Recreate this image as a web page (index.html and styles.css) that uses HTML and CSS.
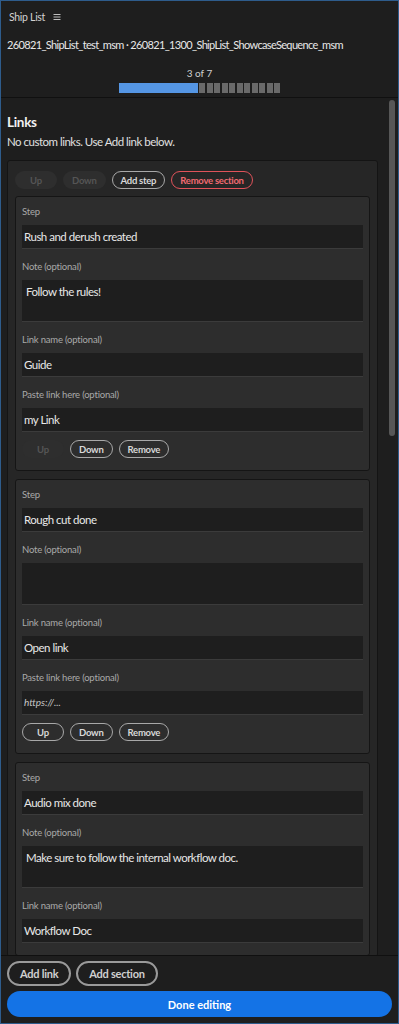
FILE: index.html
```html
<!DOCTYPE html>
<html lang="en">
<head>
    <meta charset="UTF-8">
    <meta name="viewport" content="width=device-width, initial-scale=1.0">
    <title>Ship List</title>
    <link rel="stylesheet" href="styles.css">
</head>
<body>
    <div class="panel">
        <header class="top">
            <div class="app-bar">
                <span class="app-name">Ship List</span>
                <svg class="menu-icon" width="8" height="8" viewBox="0 0 8 8">
                    <path d="M0.5 1.5h7M0.5 4h7M0.5 6.5h7" stroke="#bdbdbd" stroke-width="1"/>
                </svg>
            </div>
            <div class="doc-title">260821_ShipList_test_msm · 260821_1300_ShipList_ShowcaseSequence_msm</div>
            <div class="step-count">3 of 7</div>
            <div class="progress">
                <div class="progress-fill"></div>
                <span class="tick"></span><span class="tick"></span><span class="tick"></span>
                <span class="tick"></span><span class="tick"></span><span class="tick"></span>
                <span class="tick"></span><span class="tick"></span><span class="tick"></span>
                <span class="tick"></span><span class="tick"></span>
            </div>
        </header>

        <div class="scroll">
            <div class="scroll-content">
                <h2 class="links-title">Links</h2>
                <p class="links-desc">No custom links. Use Add link below.</p>

                <div class="section">
                    <div class="btn-row">
                        <button class="pill" disabled>Up</button>
                        <button class="pill" disabled>Down</button>
                        <button class="pill">Add step</button>
                        <button class="pill danger">Remove section</button>
                    </div>

                    <div class="step-card">
                        <label class="field-label">Step</label>
                        <div class="input">Rush and derush created</div>
                        <label class="field-label">Note (optional)</label>
                        <div class="input textarea">Follow the rules!</div>
                        <label class="field-label">Link name (optional)</label>
                        <div class="input">Guide</div>
                        <label class="field-label">Paste link here (optional)</label>
                        <div class="input">my Link</div>
                        <div class="btn-row card-btns">
                            <button class="pill" disabled>Up</button>
                            <button class="pill">Down</button>
                            <button class="pill">Remove</button>
                        </div>
                    </div>

                    <div class="step-card">
                        <label class="field-label">Step</label>
                        <div class="input">Rough cut done</div>
                        <label class="field-label">Note (optional)</label>
                        <div class="input textarea"></div>
                        <label class="field-label">Link name (optional)</label>
                        <div class="input">Open link</div>
                        <label class="field-label">Paste link here (optional)</label>
                        <div class="input placeholder">https://...</div>
                        <div class="btn-row card-btns">
                            <button class="pill">Up</button>
                            <button class="pill">Down</button>
                            <button class="pill">Remove</button>
                        </div>
                    </div>

                    <div class="step-card">
                        <label class="field-label">Step</label>
                        <div class="input">Audio mix done</div>
                        <label class="field-label">Note (optional)</label>
                        <div class="input textarea">Make sure to follow the internal workflow doc.</div>
                        <label class="field-label">Link name (optional)</label>
                        <div class="input">Workflow Doc</div>
                    </div>
                </div>
            </div>
            <div class="scrollbar"><div class="thumb"></div></div>
        </div>

        <footer class="bottom">
            <div class="bottom-row">
                <button class="pill big">Add link</button>
                <button class="pill big">Add section</button>
            </div>
            <button class="done-btn">Done editing</button>
        </footer>
    </div>
</body>
</html>
```

FILE: styles.css
```css
body {
    margin: 0;
    background-color: #1e1e1e;
    font-family: 'Lato', 'Noto Sans', sans-serif;
    color: #e6e6e6;
}
.panel {
    height: 1024px;
    box-sizing: border-box;
    border: 1px solid #2e5c8c; /* синеватая рамка панели */
    display: flex;
    flex-direction: column;
    overflow: hidden;
}

/* Шапка */
.top {
    padding: 0 6px 4px;
    border-bottom: 1px solid #101010;
}
.app-bar {
    height: 32px;
    display: flex;
    align-items: center;
    padding-left: 2px;
    gap: 8px;
}
.app-name {
    font-size: 10.5px;
    letter-spacing: -0.3px;
    color: #d2d2d2;
}
.doc-title {
    margin-top: 4px;
    font-size: 11px;
    letter-spacing: -0.65px;
    line-height: 16px;
    color: #e8e8e8;
    white-space: nowrap;
}
.step-count {
    margin-top: 13px;
    font-size: 10px;
    line-height: 14px;
    text-align: center;
    color: #cfcfcf;
}
.progress {
    margin-top: 3px;
    display: flex;
    justify-content: center;
    height: 10px;
}
.progress-fill {
    width: 79px;
    background-color: #5596e4;
}
.tick {
    width: 6px;
    margin-left: 1.5px;
    background-color: #6a6a6a;
}

/* Прокручиваемая часть */
.scroll {
    flex: 1;
    display: flex;
    min-height: 0;
}
.scroll-content {
    flex: 1;
    overflow: hidden;
    padding: 15px 7px 0 6px;
}
.scrollbar {
    width: 13px;
    padding-top: 2px;
}
.thumb {
    width: 6px;
    height: 336px;
    margin-left: 4px;
    border-radius: 3px;
    background-color: #575757;
}
.links-title {
    margin: 0;
    font-size: 13.5px;
    letter-spacing: -0.3px;
    line-height: 18px;
    font-weight: bold;
    color: #f2f2f2;
}
.links-desc {
    margin: 3px 0 10px;
    font-size: 11.5px;
    letter-spacing: -0.5px;
    line-height: 16px;
    color: #e0e0e0;
}
.section {
    background-color: #262626;
    border: 1px solid #141414;
    border-radius: 3px;
    padding: 10px 7px 0;
    display: flex;
    flex-direction: column;
    gap: 8px;
}
.section > .btn-row {
    margin-bottom: -1px;
}
.btn-row {
    display: flex;
    gap: 6px;
}
.pill {
    height: 18px;
    min-width: 42px;
    padding: 0 8px;
    box-sizing: border-box;
    border: 1.5px solid #a8a8a8;
    border-radius: 9px;
    background: transparent;
    color: #d8d8d8;
    font-family: inherit;
    font-size: 9.5px;
    letter-spacing: -0.25px;
    font-weight: bold;
    cursor: pointer;
}
.pill:disabled {
    border-color: transparent;
    background-color: #2e2e2e;
    color: #555;
}
.pill.danger {
    border-color: #e0535a;
    color: #f06a70;
}
.step-card {
    background-color: #2d2d2d;
    border: 1px solid #151515;
    border-radius: 3px;
    padding: 8px 6px 12px;
    display: flex;
    flex-direction: column;
}
.field-label {
    font-size: 9.5px;
    letter-spacing: -0.2px;
    line-height: 14px;
    color: #a9a9a9;
    margin-bottom: 6px;
}
.input + .field-label {
    margin-top: 11px;
}
.input {
    height: 24px;
    box-sizing: border-box;
    padding: 0 2px;
    background-color: #1e1e1e;
    border-bottom: 1px solid #3b3b3b;
    font-size: 11.5px;
    letter-spacing: -0.5px;
    line-height: 23px;
    color: #e8e8e8;
}
.input.textarea {
    height: 42px;
    padding: 5px 4px;
    line-height: 14px;
}
.input.placeholder {
    font-size: 10px;
    letter-spacing: 0;
    font-style: italic;
    color: #c8c8c8;
}
.card-btns {
    margin-top: 8px;
}

/* Подвал */
.bottom {
    border-top: 1px solid #101010;
    padding: 5px 6px 6px;
    display: flex;
    flex-direction: column;
    gap: 5px;
}
.bottom-row {
    display: flex;
    gap: 5px;
}
.pill.big {
    height: 25px;
    border-radius: 13px;
    border-width: 2px;
    padding: 0 11px;
    font-size: 11px;
    color: #d0d0d0;
    border-color: #9a9a9a;
}
.done-btn {
    height: 26px;
    border: none;
    border-radius: 13px;
    background-color: #1473e6;
    color: #fff;
    font-family: inherit;
    font-size: 11px;
    font-weight: bold;
    cursor: pointer;
}
```
